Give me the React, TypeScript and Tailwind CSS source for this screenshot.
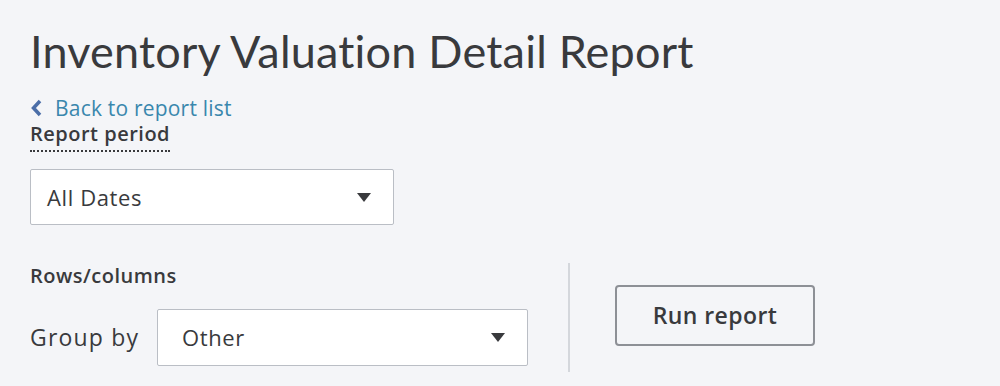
import React from "react";

function Caret() {
  return (
    <svg width="14" height="9" viewBox="0 0 14 9" className="shrink-0">
      <path d="M0 0 H14 L7 9 Z" fill="#393a3d" />
    </svg>
  );
}

export default function App() {
  return (
    <div
      className="w-[1000px] h-[386px] bg-[#f4f5f8] text-[#393a3d] overflow-hidden pl-[30px] pt-[25px]"
      style={{ fontFamily: "'Open Sans', Lato, sans-serif" }}
    >
      <h1
        className="text-[45px] leading-[52px] font-normal tracking-[0.2px]"
        style={{ fontFamily: "Lato, 'Open Sans', sans-serif" }}
      >
        Inventory Valuation Detail Report
      </h1>
      <a className="mt-[18px] flex items-center gap-[12px] text-[21px] leading-[26px] text-[#3a87ad] tracking-[0.2px]">
        <svg width="13" height="18" viewBox="0 0 13 18">
          <path d="M10 2 L3.5 9 L10 16" fill="none" stroke="#4b6ea8" strokeWidth="3.5" />
        </svg>
        <span>Back to report list</span>
      </a>
      <div className="mt-[1px]">
        <span className="text-[20px] leading-[24px] font-semibold tracking-[0.5px] border-b-2 border-dotted border-[#393a3d] pb-[3px]">
          Report period
        </span>
      </div>
      <div className="mt-[22px] w-[364px] h-[56px] bg-white border border-[#babec5] rounded-[2px] flex items-center justify-between pl-[16px] pr-[22px]">
        <span className="text-[22px] tracking-[0.6px]">All Dates</span>
        <Caret />
      </div>
      <div className="mt-[38px] flex">
        <div className="w-[540px] border-r-2 border-[#d4d7dc] pb-[6px]">
          <div className="text-[20px] leading-[26px] font-semibold tracking-[0.5px]">Rows/columns</div>
          <div className="mt-[20px] flex items-center">
            <span className="text-[23px] w-[127px] tracking-[1.2px]">Group by</span>
            <div className="w-[371px] h-[57px] bg-white border border-[#babec5] rounded-[2px] flex items-center justify-between pl-[24px] pr-[22px]">
              <span className="text-[22px] tracking-[0.6px]">Other</span>
              <Caret />
            </div>
          </div>
        </div>
        <div className="pl-[45px] pt-[22px]">
          <button className="w-[200px] h-[61px] border-2 border-[#8d9096] rounded-[4px] text-[23px] font-semibold tracking-[0.4px] text-[#393a3d]">
            Run report
          </button>
        </div>
      </div>
    </div>
  );
}
